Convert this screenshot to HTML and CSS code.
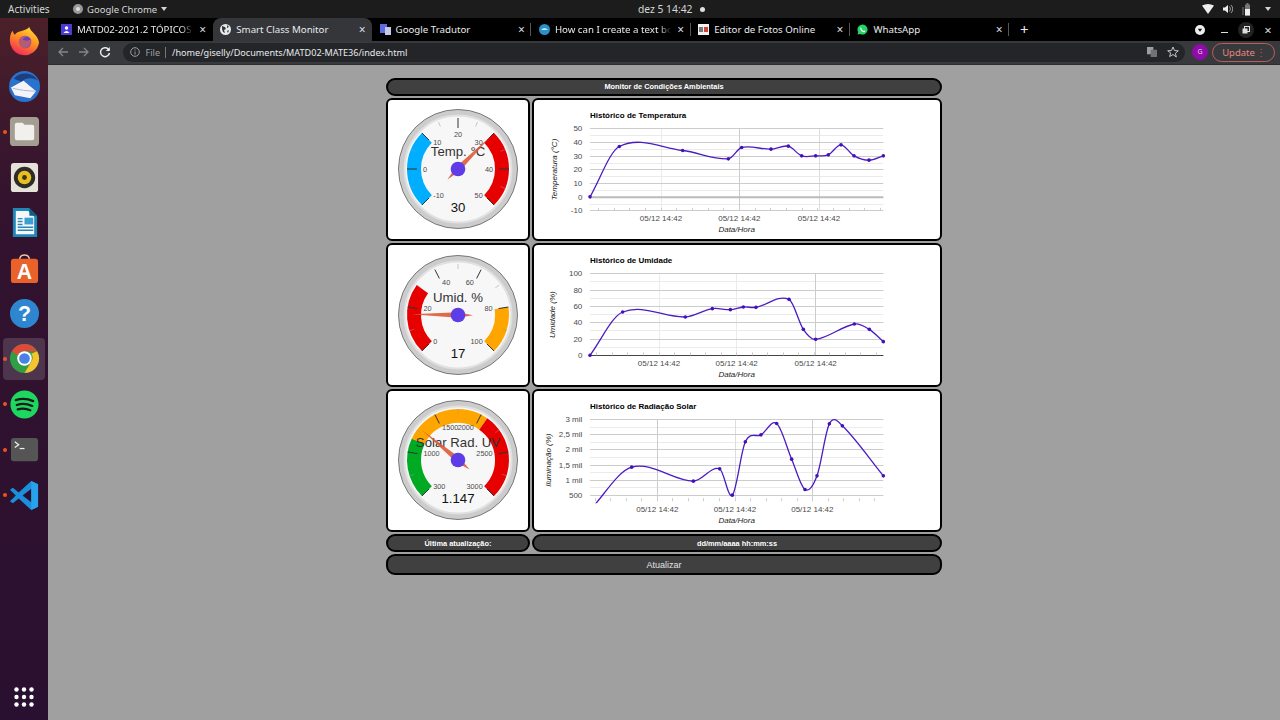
FILE: index.html
```html
<!DOCTYPE html>
<html lang="en">
<head>
  <meta charset="UTF-8">
  <title>Smart Class Monitor</title>
  <link rel="stylesheet" href="styles.css">
</head>
<body>
  <div class="topbar">
    <div class="top-left">
      <span class="activities">Activities</span>
      <svg class="top-chrome" viewBox="0 0 10 10"><circle cx="5" cy="5" r="5" fill="#999"/><circle cx="5" cy="5" r="2" fill="#ddd"/></svg>
      <span>Google Chrome</span>
      <span class="caret"></span>
    </div>
    <span class="clock">dez 5 14:42</span>
    <span class="clock-dot"></span>
    <div class="top-right">
      <svg width="12" height="10" viewBox="0 0 12 10"><path d="M0 1.5Q6-1.500 12 1.500L6 10z" fill="#eee"/></svg>
      <svg width="10" height="10" viewBox="0 0 10 10"><path d="M0 3.500h2L5 1v8L2 6.500H0z" fill="#eee"/><path d="M6.500 2.500q2 2.500 0 5M8 1q3.500 4 0 8" stroke="#999" fill="none"/></svg>
      <svg width="10" height="13" viewBox="0 0 10 13"><rect x="3" y="1.500" width="5" height="11" fill="#777"/><rect x="3" y="6" width="5" height="6.500" fill="#eee"/><rect x="4.500" y="0" width="2" height="2" fill="#777"/><path d="M1 4v8" stroke="#777"/></svg>
      <span class="caret"></span>
    </div>
  </div>

  <div class="desktop">
    <nav class="dock">
      <div class="dock-item">
        <svg viewBox="0 0 32 32"><defs><linearGradient id="fx" x1="0.800" y1="0" x2="0.300" y2="1"><stop offset="0" stop-color="#ffe03a"/><stop offset="0.450" stop-color="#ff9420"/><stop offset="1" stop-color="#f5265c"/></linearGradient></defs><path d="M21 1c1 5 9 8 10 16a15 15 0 1 1-30-4c0-3 1-6 3-8 0 2 1 3 2 4 3-5 11-3 15-8z" fill="url(#fx)"/><circle cx="16.500" cy="16.500" r="6.500" fill="#6a3fc0"/><path d="M9 14c2-3 6-5 11-3-3 0-5 1-6 3 3 2 7 1 9 0 0 5-3 9-7 9-5 0-8-4-7-9z" fill="#ff7a2a" opacity="0.500"/></svg>
      </div>
      <div class="dock-item">
        <svg viewBox="0 0 32 32"><circle cx="16" cy="16" r="16" fill="#2a72cc"/><path d="M5 8C10 1 24 0 30 10 24 6 16 7 13 11z" fill="#1c3f80"/><path d="M2 17l13-7 13 11-6 7-16-3z" fill="#f4f4f8"/><path d="M4 18l11 2 13 1" stroke="#a8b8d0" fill="none"/></svg>
      </div>
      <div class="dock-item dock-open">
        <svg viewBox="0 0 32 32"><rect x="1" y="1" width="30" height="30" rx="4" fill="#a39d92"/><path d="M6 9q0-2 2-2h6l2 2h8q2 0 2 2v12q0 2-2 2H8q-2 0-2-2z" fill="#f2f0ec"/></svg>
      </div>
      <div class="dock-item">
        <svg viewBox="0 0 32 32"><rect x="2" y="1" width="28" height="30" rx="3" fill="#e6e2da"/><circle cx="16" cy="16" r="11" fill="#2e2c28"/><circle cx="16" cy="16" r="7" fill="#e8c01e"/><circle cx="16" cy="16" r="2.500" fill="#3a3420"/></svg>
      </div>
      <div class="dock-item">
        <svg viewBox="0 0 32 32"><path d="M4 1h17l8 8v22H4z" fill="#1f86b8"/><path d="M7 4h13l6 6v18H7z" fill="#f5f8fa"/><path d="M21 1l8 8h-8z" fill="#0f5d85"/><rect x="16" y="11" width="9" height="7" fill="#3aa0d0"/><path d="M9 12h5M9 15h5M9 18h5M9 21h16M9 24h16" stroke="#2a88b8" stroke-width="1.500"/></svg>
      </div>
      <div class="dock-item">
        <svg viewBox="0 0 32 32"><path d="M11 7q0-5 5-5t5 5" stroke="#f2c8a8" stroke-width="1.500" fill="none"/><rect x="2" y="6" width="28" height="25" rx="3" fill="#e9622a"/><text x="16" y="27" class="dock-letter">A</text></svg>
      </div>
      <div class="dock-item">
        <svg viewBox="0 0 32 32"><circle cx="16" cy="16" r="15" fill="#2e86d0"/><text x="16" y="24" class="dock-letter">?</text></svg>
      </div>
      <div class="dock-item dock-open dock-active">
        <svg viewBox="0 0 32 32"><circle cx="16" cy="16" r="15" fill="#2f9e44"/><path d="M3 8.500A15 15 0 0 1 29 8.500H16A7.500 7.500 0 0 0 9 13z" fill="#dd4a3a"/><path d="M29 8.500A15 15 0 0 1 16 31L22.500 20A7.500 7.500 0 0 0 23 11z" fill="#f6c22d"/><circle cx="16" cy="16" r="7.500" fill="#fff"/><circle cx="16" cy="16" r="5.500" fill="#4a80e8"/></svg>
      </div>
      <div class="dock-item dock-open">
        <svg viewBox="0 0 32 32"><circle cx="16" cy="16" r="14.500" fill="#1ed760"/><path d="M7 11.500q9-3 18 1M8 16.500q8-2.500 16 1M9 21q7-2 13 1" stroke="#1a1a1a" stroke-width="2.300" fill="none" stroke-linecap="round"/></svg>
      </div>
      <div class="dock-item dock-open">
        <svg viewBox="0 0 32 32"><rect x="2" y="4" width="28" height="24" rx="3" fill="#555"/><path d="M6 8l4 3-4 3" stroke="#eee" stroke-width="1.300" fill="none"/><path d="M11 15h5" stroke="#eee" stroke-width="1.300"/></svg>
      </div>
      <div class="dock-item dock-open">
        <svg viewBox="0 0 32 32"><path d="M23 1l7 3.500v23L23 31 10 19l-6 5-3-2 6-6-6-6 3-2 6 5z" fill="#1b8fdc"/><path d="M23 9v14l-9-7z" fill="#2a1030"/><path d="M23 1l7 3.500v23L23 31z" fill="#27a3ee"/></svg>
      </div>
      <div class="dock-apps">
        <svg viewBox="0 0 20 20" width="20" height="20" fill="#fff"><circle cx="2.500" cy="2.500" r="2.200"/><circle cx="10" cy="2.500" r="2.200"/><circle cx="17.500" cy="2.500" r="2.200"/><circle cx="2.500" cy="10" r="2.200"/><circle cx="10" cy="10" r="2.200"/><circle cx="17.500" cy="10" r="2.200"/><circle cx="2.500" cy="17.500" r="2.200"/><circle cx="10" cy="17.500" r="2.200"/><circle cx="17.500" cy="17.500" r="2.200"/></svg>
      </div>
    </nav>

    <div class="browser">
      <div class="tabstrip">
        <div class="tab">
          <svg class="favicon" viewBox="0 0 11 11"><rect width="11" height="11" fill="#4a3ad8"/><circle cx="5.500" cy="4" r="1.700" fill="#fff"/><path d="M2.500 9q3-4 6 0z" fill="#fff"/></svg>
          <span class="tab-title tab-fade">MATD02-2021.2 TÓPICOS</span>
          <span class="tab-close">×</span>
        </div>
        <div class="tab tab-active">
          <svg class="favicon" viewBox="0 0 11 11"><circle cx="5.500" cy="5.500" r="5.500" fill="#e8eaed"/><path d="M2 2l3 1 1 2-2 1 1 3-2-1-1-3zM7 1l2 2-2 1zM7 7l2-1-1 3z" fill="#35363a"/></svg>
          <span class="tab-title">Smart Class Monitor</span>
          <span class="tab-close">×</span>
        </div>
        <div class="tab tab-sep">
          <svg class="favicon" viewBox="0 0 11 11"><rect width="7" height="9" fill="#5a6ee0"/><rect x="5" y="3" width="6" height="8" fill="#c8c8e8"/></svg>
          <span class="tab-title">Google Tradutor</span>
          <span class="tab-close">×</span>
        </div>
        <div class="tab tab-sep">
          <svg class="favicon" viewBox="0 0 11 11"><circle cx="5.500" cy="5.500" r="5.500" fill="#2a90c8"/><path d="M2 6q3.500-4 7 0z" fill="#bfe8f8"/></svg>
          <span class="tab-title tab-fade">How can I create a text bo</span>
          <span class="tab-close">×</span>
        </div>
        <div class="tab tab-sep">
          <svg class="favicon" viewBox="0 0 11 11"><rect width="11" height="11" fill="#f2f2f2"/><rect x="1" y="3" width="4" height="5" fill="#777"/><rect x="6" y="3" width="4" height="5" fill="#c8443a"/></svg>
          <span class="tab-title">Editor de Fotos Online</span>
          <span class="tab-close">×</span>
        </div>
        <div class="tab tab-sep">
          <svg class="favicon" viewBox="0 0 12 12"><path d="M6 .500a5.500 5.500 0 0 0-4.700 8.300L.500 11.500l2.800-.700A5.500 5.500 0 1 0 6 .500z" fill="#25d366"/><path d="M4 3.500q-1 1 0 3t3.500 2.500q1.500 0 1.500-1.500L7.500 7l-.7.500Q5 6.500 4.700 5.200L5.200 4.500z" fill="#fff"/></svg>
          <span class="tab-title">WhatsApp</span>
          <span class="tab-close">×</span>
        </div>
        <span class="new-tab">+</span>
        <div class="win-controls">
          <svg class="tab-search" width="10" height="10" viewBox="0 0 10 10"><circle cx="5" cy="5" r="5" fill="#eee"/><path d="M2.800 3.800h4.400L5 6.800z" fill="#111"/></svg>
          <span class="win-min"></span>
          <span class="win-max"><svg width="8" height="8" viewBox="0 0 8 8"><rect x="2.500" y=".500" width="5" height="5" fill="none" stroke="#ddd"/><rect x=".500" y="2.500" width="5" height="5" fill="#ddd"/></svg></span>
          <span class="win-close">×</span>
        </div>
      </div>

      <div class="toolbar">
        <svg class="tool-icon" viewBox="0 0 12 12"><path d="M11 6H2M6 2L2 6l4 4" stroke="#80868b" stroke-width="1.300" fill="none"/></svg>
        <svg class="tool-icon" viewBox="0 0 12 12"><path d="M1 6h9M6 2l4 4-4 4" stroke="#80868b" stroke-width="1.300" fill="none"/></svg>
        <svg class="tool-icon" viewBox="0 0 12 12"><path d="M10 4A4.500 4.500 0 1 0 10.500 7" stroke="#eee" stroke-width="1.400" fill="none"/><path d="M10.800 1v4h-4z" fill="#eee"/></svg>
        <div class="omnibox">
          <svg width="10" height="10" viewBox="0 0 10 10"><circle cx="5" cy="5" r="4.300" stroke="#9aa0a6" fill="none"/><path d="M5 4.500v3M5 2.500v1" stroke="#9aa0a6"/></svg>
          <span class="omni-file">File</span>
          <span class="omni-sep"></span>
          <span class="omni-url">/home/giselly/Documents/MATD02-MATE36/index.html</span>
          <svg class="omni-translate" width="10" height="10" viewBox="0 0 11 11"><rect width="7" height="8" fill="#9aa0a6"/><rect x="4" y="3" width="7" height="8" fill="#6f7378"/></svg>
          <svg width="12" height="12" viewBox="0 0 12 12"><path d="M6 1l1.500 3.500 3.800.300-2.900 2.500.9 3.700L6 8.500l-3.300 2 .9-3.700L.7 4.800l3.800-.300z" stroke="#c4c7c5" fill="none"/></svg>
        </div>
        <span class="avatar">G</span>
        <span class="update">Update<span class="update-dots">⋮</span></span>
      </div>

      <main class="page">
        <div class="monitor">
          <div class="pill pill-wide">Monitor de Condições Ambientais</div>
          <div class="card" id="gauge-temp"></div>
          <div class="card" id="chart-temp"></div>
          <div class="card" id="gauge-umid"></div>
          <div class="card" id="chart-umid"></div>
          <div class="card" id="gauge-solar"></div>
          <div class="card" id="chart-solar"></div>
          <div class="pill">Última atualização:</div>
          <div class="pill">dd/mm/aaaa hh:mm:ss</div>
          <button class="pill pill-wide refresh">Atualizar</button>
        </div>
      </main>
    </div>
  </div>
  <script src="script.js"></script>
</body>
</html>
```

FILE: styles.css
```css
* {
  box-sizing: border-box;
}

body {
  margin: 0;
  height: 720px;
  overflow: hidden;
  display: flex;
  flex-direction: column;
  font-family: "Noto Sans", sans-serif;
  background-color: #a0a0a0;
}

.topbar {
  height: 18px;
  flex: none;
  display: flex;
  align-items: center;
  padding-left: 8px;
  background-color: #1c1c1c;
  color: #d6d6d6;
  font-size: 9.5px;
}

.top-left {
  width: 630px;
  display: flex;
  align-items: center;
}

.activities {
  width: 65px;
  font-size: 10px;
}

.top-chrome {
  width: 10px;
  height: 10px;
  margin-right: 4px;
}

.caret {
  width: 0;
  height: 0;
  margin-left: 4px;
  border: 3.5px solid transparent;
  border-top: 4px solid #d6d6d6;
  border-bottom: none;
}

.clock {
  width: 62px;
  font-size: 10.3px;
  white-space: nowrap;
}

.clock-dot {
  width: 5px;
  height: 5px;
  border-radius: 50%;
  background-color: #e0e0e0;
}

.top-right {
  margin-left: auto;
  margin-right: 9px;
  display: flex;
  align-items: center;
  gap: 9px;
}

.desktop {
  flex: 1;
  display: flex;
  min-height: 0;
}

.dock {
  width: 48px;
  flex: none;
  display: flex;
  flex-direction: column;
  align-items: center;
  padding-top: 0.5px;
  background: linear-gradient(#4b2029, #33132e 25%, #2a1030);
}

.dock-item {
  position: relative;
  width: 42px;
  height: 45.4px;
  flex: none;
  display: flex;
  align-items: center;
  justify-content: center;
  border-radius: 4px;
}

.dock-item svg {
  width: 31px;
  height: 31px;
}

.dock-open::before {
  content: "";
  position: absolute;
  left: -0.5px;
  top: 50%;
  width: 4px;
  height: 4px;
  margin-top: -2px;
  border-radius: 50%;
  background-color: #e95420;
}

.dock-active {
  height: 42px;
  margin: 1.7px 0;
  background-color: rgba(255, 255, 255, 0.15);
}

.dock-letter {
  font-family: "Liberation Sans", sans-serif;
  font-weight: bold;
  font-size: 22px;
  fill: #fff;
  text-anchor: middle;
}

.dock-apps {
  margin-top: auto;
  margin-bottom: 13px;
  display: flex;
}

.browser {
  flex: 1;
  min-width: 0;
  display: flex;
  flex-direction: column;
}

.tabstrip {
  height: 23px;
  flex: none;
  display: flex;
  align-items: stretch;
  padding-left: 5.5px;
  background-color: #000;
  color: #e8eaed;
  font-size: 9.7px;
}

.tab {
  position: relative;
  width: 159.3px;
  flex: none;
  display: flex;
  align-items: center;
  padding: 0 4px 1px 7.5px;
}

.tab-active {
  background-color: #35363a;
  border-radius: 8px 8px 0 0;
}

.tab-sep::after {
  content: "";
  position: absolute;
  right: 0;
  top: 5px;
  bottom: 5px;
  width: 1px;
  background-color: #555;
}

.favicon {
  width: 11px;
  height: 11px;
  flex: none;
  margin-right: 5px;
}

.tab-title {
  flex: 1;
  min-width: 0;
  margin-right: 4px;
  white-space: nowrap;
}

.tab-fade {
  -webkit-mask-image: linear-gradient(to right, #000 90%, transparent 100%);
}

.tab-close {
  width: 12px;
  text-align: center;
  font-size: 12px;
  color: #dadce0;
}

.new-tab {
  width: 30px;
  align-self: center;
  text-align: center;
  font-size: 15px;
  line-height: 15px;
}

.win-controls {
  margin-left: auto;
  display: flex;
  align-items: center;
}

.tab-search {
  margin-right: 15.5px;
}

.win-min {
  width: 7px;
  height: 1.5px;
  margin-top: 6px;
  margin-right: 10px;
  background-color: #ddd;
}

.win-max {
  width: 16px;
  height: 16px;
  margin-right: 8.5px;
  display: flex;
  align-items: center;
  justify-content: center;
  border-radius: 50%;
  background-color: #222;
}

.win-close {
  width: 12px;
  margin-right: 6px;
  text-align: center;
  font-size: 13px;
  color: #ddd;
}

.toolbar {
  height: 24px;
  flex: none;
  display: flex;
  align-items: center;
  padding: 0 5px 1px 8.5px;
  background-color: #38393c;
  border-bottom: 1px solid #2c2d30;
}

.tool-icon {
  width: 12px;
  height: 12px;
  margin-right: 9px;
  flex: none;
}

.omnibox {
  width: 1066px;
  height: 19px;
  margin-left: 3px;
  display: flex;
  align-items: center;
  padding: 0 6px 0 7px;
  border-radius: 10px;
  background-color: #242528;
  font-size: 9.1px;
  color: #e8eaed;
}

.omni-file {
  margin-left: 6px;
  color: #9aa0a6;
}

.omni-sep {
  width: 1px;
  height: 11px;
  margin: 0 6px 0 5px;
  background-color: #777;
}

.omni-url {
  flex: 1;
  white-space: nowrap;
}

.omni-translate {
  margin-right: 10px;
}

.avatar {
  width: 16px;
  height: 16px;
  margin-left: 7px;
  border-radius: 50%;
  background-color: #8e0ca8;
  color: #e8d0f0;
  font-size: 7px;
  line-height: 16px;
  text-align: center;
}

.update {
  width: 63px;
  height: 19px;
  margin-left: 4px;
  padding: 0 8px 0 9px;
  display: flex;
  align-items: center;
  justify-content: space-between;
  border: 1px solid #b8605a;
  border-radius: 10px;
  color: #e8867c;
  font-size: 9.5px;
}

.update-dots {
  color: #e04a3a;
}

.page {
  flex: 1;
  min-height: 0;
  padding-top: 12.5px;
  background-color: #a0a0a0;
}

.monitor {
  width: 556px;
  margin: 0 auto;
  display: grid;
  grid-template-columns: 144px 410px;
  grid-template-rows: 18px 143.5px 143.5px 143.5px 18px 21px;
  gap: 2px;
  font-family: "Liberation Sans", Arial, sans-serif;
}

.pill {
  display: flex;
  align-items: center;
  justify-content: center;
  border: 2px solid #000;
  border-radius: 9px;
  background-color: #404040;
  color: #fff;
  font-size: 7.4px;
  font-weight: bold;
}

.pill-wide {
  grid-column: 1 / 3;
}

.refresh {
  padding: 0;
  font-family: inherit;
  font-size: 9px;
  font-weight: normal;
  color: #e4e4e4;
}

.card {
  display: flex;
  align-items: center;
  justify-content: center;
  border: 2px solid #000;
  border-radius: 6px;
  background-color: #fff;
  overflow: hidden;
}

.card svg {
  flex: none;
}

.g-label {
  font-size: 7.3px;
  fill: #4a4a4a;
}

.g-title,
.g-value {
  font-size: 13.2px;
  text-anchor: middle;
}

.g-title {
  fill: #333;
}

.g-value {
  fill: #111;
}

.c-title {
  font-size: 8px;
  font-weight: bold;
  fill: #000;
}

.c-label {
  font-size: 8px;
  fill: #4a4a4a;
}

.c-date {
  text-anchor: middle;
}

.c-axis {
  font-size: 8px;
  font-style: italic;
  fill: #222;
  text-anchor: middle;
}
```

FILE: script.js
```js
const NS = 'viewBox="0 0 140 140" width="140" height="140"';

function polar(r, deg) {
  const a = (deg - 90) * Math.PI / 180;
  return [70 + r * Math.cos(a), 70 + r * Math.sin(a)];
}

function gauge(id, g) {
  const angle = f => -135 + 270 * f;
  const frac = v => (v - g.min) / (g.max - g.min);
  let s = `<svg ${NS}>`;
  s += '<circle cx="70" cy="70" r="59.5" fill="#ccc" stroke="#777"/>';
  s += '<circle cx="70" cy="70" r="53.5" fill="#f7f7f7" stroke="#e0e0e0" stroke-width="2"/>';

  g.bands.forEach(b => {
    const a = polar(44, angle(frac(b[0])));
    const z = polar(44, angle(frac(b[1])));
    const large = (frac(b[1]) - frac(b[0])) > 2 / 3 ? 1 : 0;
    s += `<path d="M${a[0]} ${a[1]}A44 44 0 ${large} 1 ${z[0]} ${z[1]}" fill="none" stroke="${b[2]}" stroke-width="14"/>`;
  });

  const n = g.labels.length - 1;
  for (let i = 0; i <= n * 2; i++) {
    const deg = angle(i / (n * 2));
    const major = i % 2 == 0;
    const p = polar(major ? 41 : 46, deg);
    const q = polar(51, deg);
    s += `<line x1="${p[0]}" y1="${p[1]}" x2="${q[0]}" y2="${q[1]}" stroke="${major ? '#333' : '#999'}" stroke-width="${major ? 1 : 0.5}"/>`;
  }

  g.labels.forEach((label, i) => {
    const deg = angle(i / n);
    const p = polar(35, deg);
    const anchor = Math.abs(deg) < 1 ? 'middle' : deg < 0 ? 'start' : 'end';
    // labels on the diagonals sit a bit further out, up or down
    const push = Math.sign(p[1] - 70) * 2 * Math.abs(Math.sin(2 * deg * Math.PI / 180));
    s += `<text class="g-label" x="${p[0]}" y="${p[1] + push + 2.5}" text-anchor="${anchor}">${label}</text>`;
  });

  s += `<text class="g-title" x="70" y="57">${g.title}</text>`;
  s += `<text class="g-value" x="70" y="113">${g.text}</text>`;

  const deg = angle(frac(g.value));
  const tip = polar(47, deg);
  const tail = polar(15, deg + 180);
  const l = polar(2.8, deg - 90);
  const r = polar(2.8, deg + 90);
  s += `<polygon points="${tip} ${r} ${tail} ${l}" fill="#dc5a38" fill-opacity="0.9"/>`;
  s += '<circle cx="70" cy="70" r="7.3" fill="#5f3de6"/>';
  s += '</svg>';
  document.getElementById(id).innerHTML = s;
}

// curve through the points, handle length follows the width of each segment
function smooth(pts) {
  const last = pts.length - 1;
  const slope = i => {
    const a = pts[Math.max(i - 1, 0)];
    const b = pts[Math.min(i + 1, last)];
    return (b[1] - a[1]) / (b[0] - a[0]);
  };
  let d = `M${pts[0][0]} ${pts[0][1]}`;
  for (let i = 0; i < last; i++) {
    const p1 = pts[i];
    const p2 = pts[i + 1];
    const h = (p2[0] - p1[0]) / 3;
    d += `C${p1[0] + h} ${p1[1] + slope(i) * h} ${p2[0] - h} ${p2[1] - slope(i + 1) * h} ${p2[0]} ${p2[1]}`;
  }
  return d;
}

// c.pts and the other positions are measured on the reference at 3x
function chart(id, c) {
  const X = x => x / 3 - 4;
  const Y = y => y / 3 + c.dy;
  const crisp = v => Math.floor(v) + 0.5;
  const left = X(180), right = X(1060);
  let s = `<svg viewBox="0 0 406 139.5" width="406" height="139.5">`;
  s += `<defs><clipPath id="${id}-clip"><rect x="${left - 2}" y="${Y(c.top) - 4}" width="${right - left + 4}" height="${Y(c.clip) - Y(c.top) + 6}"/></clipPath></defs>`;

  const n = c.labels.length - 1;
  const step = (c.bottom - c.top) / n;
  for (let i = 0; i < n; i++) {
    const y = crisp(Y(c.top + (i + 0.5) * step));
    s += `<line x1="${left}" x2="${right}" y1="${y}" y2="${y}" stroke="#ebebeb"/>`;
  }
  c.vlines.forEach(v => {
    const x = crisp(X(v[0]));
    s += `<line x1="${x}" x2="${x}" y1="${Y(c.top)}" y2="${Y(c.clip)}" stroke="${v[1]}"/>`;
  });
  c.labels.forEach((label, i) => {
    const y = crisp(Y(c.top + i * step));
    s += `<line x1="${left}" x2="${right}" y1="${y}" y2="${y}" stroke="#ccc"/>`;
    s += `<text class="c-label" x="${X(157)}" y="${y + 2.5}" text-anchor="end">${label}</text>`;
  });
  if (c.zero) {
    const y = Y(c.zero);
    s += `<line x1="${left}" x2="${right}" y1="${y}" y2="${y}" stroke="#bbb" stroke-width="2"/>`;
  }
  if (c.base) {
    const y = crisp(Y(c.bottom));
    s += `<line x1="${left}" x2="${right}" y1="${y}" y2="${y}" stroke="#444"/>`;
  }

  // small ticks between the dated lines
  const tick = (c.vlines[1][0] - c.vlines[0][0]) / 5;
  for (let x = c.vlines[0][0] - tick * 4; x < 1065; x += tick) {
    const px = crisp(X(x));
    s += `<line x1="${px}" x2="${px}" y1="${Y(c.clip) - 3}" y2="${Y(c.clip)}" stroke="#ccc"/>`;
  }

  c.vlines.forEach(v => {
    s += `<text class="c-label c-date" x="${X(v[0])}" y="${Y(c.dateY) + 3}">05/12 14:42</text>`;
  });

  const pts = c.pts.map(p => [X(p[0]), Y(p[1])]);
  s += `<g clip-path="url(#${id}-clip)"><path d="${smooth(pts)}" fill="none" stroke="#4c1cc0" stroke-width="1.300"/>`;
  c.pts.forEach((p, i) => {
    if (c.skipFirst && i == 0) return;
    s += `<circle cx="${pts[i][0]}" cy="${pts[i][1]}" r="1.800" fill="#4212b8"/>`;
  });
  s += '</g>';

  s += `<text class="c-title" x="${left}" y="${Y(c.titleY) + 3}">${c.title}</text>`;
  s += `<text class="c-axis" x="${X(620)}" y="${Y(c.axisY) + 3}">Data/Hora</text>`;
  const ax = X(c.yTitleX), ay = Y(c.yTitleY);
  s += `<text class="c-axis" transform="rotate(-90 ${ax} ${ay})" x="${ax}" y="${ay + 3}">${c.yTitle}</text>`;
  s += '</svg>';
  document.getElementById(id).innerHTML = s;
}

gauge('gauge-temp', {
  min: -10, max: 50, value: 30, text: '30', title: 'Temp. °C',
  labels: [-10, 0, 10, 20, 30, 40, 50],
  bands: [[-10, 10, '#00aeff'], [30, 50, '#e60000']]
});
gauge('gauge-umid', {
  min: 0, max: 100, value: 17, text: '17', title: 'Umid. %',
  labels: [0, 20, 40, 60, 80, 100],
  bands: [[0, 30, '#e60000'], [80, 100, '#ffa500']]
});
gauge('gauge-solar', {
  min: 300, max: 3000, value: 1147, text: '1.147', title: 'Solar Rad. UV',
  labels: [300, 1000, 1500, 2000, 2500, 3000],
  bands: [[300, 1000, '#00aa22'], [1000, 2000, '#ffa500'], [2000, 3000, '#e60000']]
});

chart('chart-temp', {
  dy: -4.5, top: 100, bottom: 346, clip: 346, zero: 305, titleY: 57, dateY: 368, axisY: 399,
  title: 'Histórico de Temperatura', yTitle: 'Temperatura (°C)', yTitleX: 73, yTitleY: 222,
  labels: [50, 40, 30, 20, 10, 0, -10],
  vlines: [[393, '#ebebeb'], [628, '#ccc'], [867, '#ddd']],
  pts: [[180, 304], [268, 153], [458, 165], [595, 190], [635, 156], [723, 161], [775, 152], [815, 181], [857, 181], [895, 178], [933, 148], [972, 181], [1017, 194], [1060, 181]]
});
chart('chart-umid', {
  dy: -3, top: 95, bottom: 340, clip: 340, base: true, titleY: 55, dateY: 363, axisY: 397,
  title: 'Histórico de Umidade', yTitle: 'Umidade (%)', yTitleX: 67, yTitleY: 218,
  labels: [100, 80, 60, 40, 20, 0],
  vlines: [[387, '#ebebeb'], [620, '#ebebeb'], [857, '#ccc']],
  pts: [[180, 340], [278, 210], [466, 225], [547, 200], [601, 203], [640, 195], [678, 196], [777, 172], [820, 262], [857, 292], [973, 246], [1018, 262], [1060, 299]]
});
chart('chart-solar', {
  dy: -2.5, top: 93, bottom: 321, clip: 338, skipFirst: true, titleY: 52, dateY: 361, axisY: 395,
  title: 'Histórico de Radiação Solar', yTitle: 'Iluminação (%)', yTitleX: 55, yTitleY: 215,
  labels: ['3 mil', '2,5 mil', '2 mil', '1,5 mil', '1 mil', '500'],
  vlines: [[382, '#ccc'], [615, '#ddd'], [847, '#ccc']],
  pts: [[180, 365], [305, 236], [490, 278], [569, 241], [607, 320], [646, 160], [693, 139], [740, 105], [785, 212], [825, 303], [861, 262], [898, 106], [937, 112], [1060, 262]]
});
```
